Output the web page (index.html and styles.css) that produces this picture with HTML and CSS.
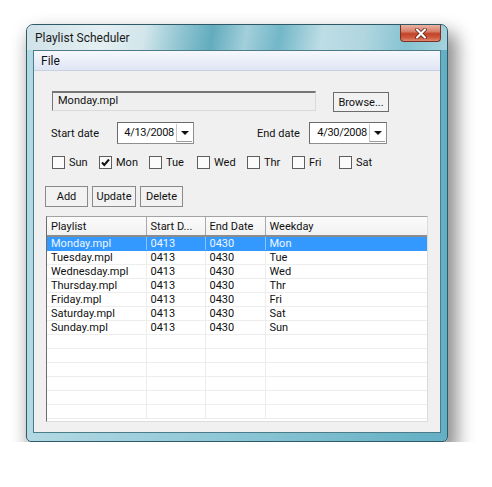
FILE: index.html
```html
<!DOCTYPE html>
<html>
<head>
<meta charset="utf-8">
<link rel="stylesheet" href="styles.css">
</head>
<body>
<div class="desk">
  <div class="window">
    <div class="titlebar">
      <span class="title">Playlist Scheduler</span>
      <div class="close">
        <svg width="14" height="11" viewBox="0 0 14 11">
          <path d="M3 1.5 L11 9.5 M11 1.5 L3 9.5" stroke="#5a1a10" stroke-width="3.6" stroke-linecap="round"/>
          <path d="M3 1.5 L11 9.5 M11 1.5 L3 9.5" stroke="#ffffff" stroke-width="2.2" stroke-linecap="round"/>
        </svg>
      </div>
    </div>
    <div class="client">
      <div class="menubar"><span class="menu-item">File</span></div>
      <div class="content">
        <div class="row row-file">
          <div class="textbox">Monday.mpl</div>
          <div class="btn btn-browse">Browse...</div>
        </div>
        <div class="row row-dates">
          <span class="label label-start">Start date</span>
          <div class="picker picker-start">
            <span class="picker-text">4/13/2008</span>
            <span class="picker-btn"><i class="tri"></i></span>
          </div>
          <span class="label label-end">End date</span>
          <div class="picker picker-end">
            <span class="picker-text">4/30/2008</span>
            <span class="picker-btn"><i class="tri"></i></span>
          </div>
        </div>
        <div class="row row-days">
          <label class="check"><span class="box"></span><span>Sun</span></label>
          <label class="check"><span class="box"><svg width="11" height="11" viewBox="0 0 11 11"><path d="M2 5.5 L4.3 8 L9 2.5" fill="none" stroke="#111" stroke-width="2"/></svg></span><span>Mon</span></label>
          <label class="check"><span class="box"></span><span>Tue</span></label>
          <label class="check"><span class="box"></span><span>Wed</span></label>
          <label class="check"><span class="box"></span><span>Thr</span></label>
          <label class="check"><span class="box"></span><span>Fri</span></label>
          <label class="check"><span class="box"></span><span>Sat</span></label>
        </div>
        <div class="row row-buttons">
          <div class="btn btn-add">Add</div>
          <div class="btn btn-update">Update</div>
          <div class="btn btn-delete">Delete</div>
        </div>
        <div class="list">
          <table class="grid">
            <colgroup>
              <col class="c1"><col class="c2"><col class="c3"><col class="c4">
            </colgroup>
            <thead>
              <tr><th>Playlist</th><th>Start D...</th><th>End Date</th><th>Weekday</th></tr>
            </thead>
            <tbody>
              <tr class="sel"><td>Monday.mpl</td><td>0413</td><td>0430</td><td>Mon</td></tr>
              <tr><td>Tuesday.mpl</td><td>0413</td><td>0430</td><td>Tue</td></tr>
              <tr><td>Wednesday.mpl</td><td>0413</td><td>0430</td><td>Wed</td></tr>
              <tr><td>Thursday.mpl</td><td>0413</td><td>0430</td><td>Thr</td></tr>
              <tr><td>Friday.mpl</td><td>0413</td><td>0430</td><td>Fri</td></tr>
              <tr><td>Saturday.mpl</td><td>0413</td><td>0430</td><td>Sat</td></tr>
              <tr><td>Sunday.mpl</td><td>0413</td><td>0430</td><td>Sun</td></tr>
              <tr><td></td><td></td><td></td><td></td></tr>
              <tr><td></td><td></td><td></td><td></td></tr>
              <tr><td></td><td></td><td></td><td></td></tr>
              <tr><td></td><td></td><td></td><td></td></tr>
              <tr><td></td><td></td><td></td><td></td></tr>
              <tr><td></td><td></td><td></td><td></td></tr>
            </tbody>
          </table>
        </div>
      </div>
    </div>
  </div>
</div>
</body>
</html>
```

FILE: styles.css
```css
* { box-sizing: border-box; }

body {
  margin: 0;
  background: #ffffff;
  font-family: Roboto, "Noto Sans", sans-serif;
  font-size: 11px;
  color: #111;
}

.desk {
  padding: 24px 0 0 26px;
}

.window {
  width: 422px;
  height: 418px;
  border: 1px solid #2f5967;
  border-radius: 7px 7px 5px 5px;
  background: linear-gradient(to right, #b3d9e3, #8cc6d5 50%, #63afc4);
  box-shadow: 6px 11px 18px 3px rgba(0, 0, 0, 0.45);
  padding: 0 6px 8px 6px;
  display: flex;
  flex-direction: column;
}

.titlebar {
  height: 25px;
  margin: 0 -6px;
  padding: 0 6px 0 8px;
  display: flex;
  align-items: center;
  justify-content: space-between;
  border-radius: 6px 6px 0 0;
  background: linear-gradient(100deg,
    #cfe2e8 0%, #e4eff2 18%, #d2e6eb 28%, #94c7d3 36%,
    #62acbe 44%, #a2cfda 52%, #72b7c8 60%, #bedde5 70%,
    #b0d6df 80%, #86c3d2 90%, #a5d2de 100%);
}

.title {
  font-size: 12px;
  color: #1a1a1a;
  padding-top: 1px;
}

.close {
  align-self: flex-start;
  width: 41px;
  height: 17px;
  border: 1px solid #7a3023;
  border-top: none;
  border-radius: 0 0 4px 4px;
  background: linear-gradient(#eab3a2, #d8806a 40%, #c24228 55%, #cf5b40 80%, #e08a70);
  display: flex;
  align-items: center;
  justify-content: center;
}

.client {
  flex: 1;
  border: 1px solid #4c7b8a;
  background: #f0f0f0;
  display: flex;
  flex-direction: column;
}

.menubar {
  height: 20px;
  border-bottom: 1px solid #c9d1e3;
  background: linear-gradient(#f6f8fd, #dfe5f4);
  padding-left: 7px;
  display: flex;
  align-items: center;
  font-size: 12px;
}

.content {
  padding-top: 20px;
}

.row {
  display: flex;
  align-items: center;
}

.row-file {
  margin-left: 18px;
  align-items: flex-start;
  gap: 17px;
}

.textbox {
  width: 264px;
  height: 20px;
  border-top: 2px solid #767676;
  border-left: 1px solid #767676;
  border-right: 1px solid #dadada;
  border-bottom: 1px solid #dadada;
  background: #efefef;
  padding-left: 5px;
  line-height: 16px;
}

.btn {
  height: 21px;
  border: 1px solid #8a8a8a;
  background: #f2f2f2;
  display: flex;
  align-items: center;
  justify-content: center;
}

.btn-browse {
  width: 56px;
  height: 20px;
  margin-top: 1px;
  border-color: #6c6c6c;
}

.row-dates {
  margin-top: 10px;
  margin-left: 17px;
}

.label-start { width: 66px; }
.label-end { width: 52px; margin-left: 63px; }

.picker {
  height: 22px;
  border: 1px solid #8e8e8e;
  border-top-color: #6a6a6a;
  border-left-color: #6a6a6a;
  background: #ffffff;
  display: flex;
  align-items: stretch;
}

.picker-start { width: 77px; }
.picker-end { width: 78px; }

.picker-text {
  flex: 1;
  text-align: right;
  padding-right: 2px;
  line-height: 19px;
  letter-spacing: -0.3px;
}

.picker-btn {
  width: 16px;
  margin: 1px 1px 1px 0;
  border-left: 1px solid #c8c8c8;
  border-bottom: 1px solid #9a9a9a;
  display: flex;
  align-items: center;
  justify-content: center;
}

.tri {
  width: 0;
  height: 0;
  border-left: 4px solid transparent;
  border-right: 4px solid transparent;
  border-top: 4px solid #111;
}

.row-days {
  margin-top: 10px;
  margin-left: 18px;
  height: 17px;
  display: grid;
  grid-template-columns: 47px 50px 48px 50px 45px 47px auto;
}

.check {
  display: flex;
  align-items: center;
  gap: 4px;
}

.box {
  width: 13px;
  height: 13px;
  border: 1px solid #5e5e5e;
  background: #fbfbfb;
  display: flex;
  align-items: center;
  justify-content: center;
}

.row-buttons {
  margin-top: 15px;
  margin-left: 11px;
  gap: 4px;
}

.btn-add { width: 43px; }
.btn-update { width: 44px; }
.btn-delete { width: 43px; }

.list {
  margin-top: 9px;
  margin-left: 12px;
  width: 382px;
  height: 206px;
  border-top: 1px solid #a3a3a3;
  border-left: 1px solid #6e6e6e;
  border-right: 1px solid #dcdcdc;
  border-bottom: 1px solid #dcdcdc;
  background: #ffffff;
  overflow: hidden;
}

.grid {
  width: 380px;
  table-layout: fixed;
  border-collapse: collapse;
}

.c1 { width: 99px; }
.c2 { width: 59px; }
.c3 { width: 60px; }
.c4 { width: 162px; }

.grid th {
  height: 19px;
  padding: 0 0 0 4px;
  text-align: left;
  font-weight: normal;
  background: linear-gradient(#fbfbfb, #f1f1f1);
  border-right: 1px solid #a8a8a8;
  border-bottom: 2px solid #8c8c8c;
  white-space: nowrap;
  overflow: hidden;
}

.grid th:last-child {
  border-right-color: #707070;
}

.grid td {
  height: 14px;
  padding: 0 0 0 4px;
  line-height: 13px;
  border-right: 1px solid #ededed;
  border-bottom: 1px solid #ededed;
  white-space: nowrap;
  overflow: hidden;
}

.grid td:last-child {
  border-right: none;
}

.grid tr.sel td {
  background: #3399ff;
  color: #eef6ff;
  border-right-color: #8cc4ff;
  border-bottom-color: #3399ff;
}
```
